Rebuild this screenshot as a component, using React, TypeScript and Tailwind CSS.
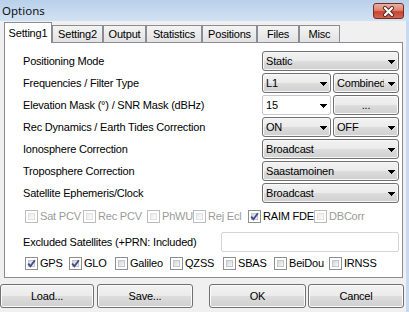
const Arrow = () => (
  <svg width="7" height="4" viewBox="0 0 7 4" shapeRendering="crispEdges">
    <path d="M0 0H7V1H6V2H5V3H4V4H3V3H2V2H1V1H0Z" fill="#000" />
  </svg>
);

const Select = ({ value, className }: { value: string; className: string }) => (
  <div
    className={
      "h-[20px] flex items-center border border-[#707070] rounded-[3px] bg-[linear-gradient(180deg,#f2f2f2_0%,#ebebeb_50%,#dddddd_51%,#cfcfcf_100%)] shadow-[inset_0_0_0_1px_#f7f7f7] " +
      className
    }
  >
    <span className="flex-1 pl-[3px] overflow-hidden whitespace-nowrap">{value}</span>
    <span className="w-[14px] shrink-0 flex justify-center pt-[1px]">
      <Arrow />
    </span>
  </div>
);

const Check = ({ checked, disabled }: { checked?: boolean; disabled?: boolean }) => (
  <div
    className={
      "relative w-[13px] h-[13px] shrink-0 border bg-white p-[2px] " +
      (disabled ? "border-[#bcbcbc]" : "border-[#8e8f8f]")
    }
  >
    <div
      className={
        "w-full h-full border " +
        (disabled
          ? "border-[#e2e2e2] bg-linear-to-br from-[#ececec] to-[#fafafa]"
          : "border-[#c3c6cb] bg-linear-to-br from-[#d4d6d9] to-[#f7f7f7]")
      }
    />
    {checked && (
      <svg className="absolute left-0 top-0" width="11" height="11" viewBox="0 0 11 11">
        <path d="M2.2 5.6 L4.4 8.2 L8.9 2.2" fill="none" stroke="#3f4f8c" strokeWidth="1.9" />
      </svg>
    )}
  </div>
);

const Box = ({
  label,
  checked,
  disabled,
  width,
}: {
  label: string;
  checked?: boolean;
  disabled?: boolean;
  width: string;
}) => (
  <div className={"flex items-center gap-[2px] " + width}>
    <Check checked={checked} disabled={disabled} />
    <span className={disabled ? "text-[#9a9a9a]" : "text-black"}>{label}</span>
  </div>
);

const Button = ({ label, className }: { label: string; className: string }) => (
  <div
    className={
      "h-[24px] flex items-center justify-center border border-[#707070] rounded-[3px] bg-[linear-gradient(180deg,#f2f2f2_0%,#ebebeb_50%,#dddddd_51%,#cfcfcf_100%)] shadow-[inset_0_0_0_1px_#fbfbfb] " +
      className
    }
  >
    {label}
  </div>
);

export default function App() {
  const tabs = [
    { name: "Setting2", w: "w-[51px]" },
    { name: "Output", w: "w-[43px]" },
    { name: "Statistics", w: "w-[56px]" },
    { name: "Positions", w: "w-[55px]" },
    { name: "Files", w: "w-[42px]" },
    { name: "Misc", w: "w-[41px]" },
  ];

  const rows = [
    "Positioning Mode",
    "Frequencies / Filter Type",
    "Elevation Mask (°) / SNR Mask (dBHz)",
    "Rec Dynamics / Earth Tides Correction",
    "Ionosphere Correction",
    "Troposphere Correction",
    "Satellite Ephemeris/Clock",
  ];

  const control = (i: number) => {
    switch (i) {
      case 0:
        return <Select value="Static" className="w-[137px]" />;
      case 1:
        return (
          <div className="flex gap-[2px]">
            <Select value="L1" className="w-[69px]" />
            <Select value="Combined" className="w-[66px]" />
          </div>
        );
      case 2:
        return (
          <div className="flex gap-[2px]">
            <div className="w-[69px] h-[20px] flex items-center bg-white border border-[#c5c8cd] rounded-[2px]">
              <span className="flex-1 pl-[3px]">15</span>
              <span className="w-[14px] flex justify-center pt-[1px]">
                <Arrow />
              </span>
            </div>
            <Button label="..." className="w-[66px] !h-[20px]" />
          </div>
        );
      case 3:
        return (
          <div className="flex gap-[2px]">
            <Select value="ON" className="w-[69px]" />
            <Select value="OFF" className="w-[66px]" />
          </div>
        );
      case 4:
        return <Select value="Broadcast" className="w-[137px]" />;
      case 5:
        return <Select value="Saastamoinen" className="w-[137px]" />;
      default:
        return <Select value="Broadcast" className="w-[137px]" />;
    }
  };

  return (
    <div className="w-[409px] h-[312px] overflow-hidden flex flex-col bg-[#c7daf1] text-black font-['Liberation_Sans',Arial,sans-serif] text-[11px] tracking-[-0.2px]">
      {/* title bar */}
      <div className="h-[21px] shrink-0 flex items-center justify-between pl-[2px] pr-[5px] bg-linear-to-b from-[#b9d0eb] to-[#d2e2f4]">
        <span className="font-['Noto_Sans',sans-serif] text-[11.5px] tracking-normal text-[#111]">Options</span>
        <div className="w-[31px] h-[16px] mt-[1px] flex items-center justify-center rounded-[3px] border border-[#7b2a22] bg-[linear-gradient(180deg,#eab0a4_0%,#dc8270_45%,#c8442f_55%,#d06450_100%)]">
          <svg width="13" height="11" viewBox="0 0 13 11">
            <path d="M3 2 L10 9 M10 2 L3 9" stroke="#4a2a26" strokeWidth="4" strokeLinecap="round" />
            <path d="M3 2 L10 9 M10 2 L3 9" stroke="#fff" strokeWidth="2.2" strokeLinecap="round" />
          </svg>
        </div>
      </div>

      {/* client area */}
      <div className="flex-1 mr-[3px] bg-[#f0f0f0] flex flex-col">
        <div className="mt-[1px] h-[20px] pl-[4px] flex items-end relative z-10">
          <div className="w-[48px] h-[21px] -mb-px flex items-center justify-center bg-white border border-b-0 border-[#898c95]">
            Setting1
          </div>
          {tabs.map((t) => (
            <div
              key={t.name}
              className={
                "h-[17px] flex items-center justify-center border border-b-0 border-[#898c95] bg-linear-to-b from-[#f4f4f4] to-[#e2e2e2] " +
                t.w
              }
            >
              {t.name}
            </div>
          ))}
        </div>

        <div className="ml-[4px] w-[399px] h-[236px] bg-white border border-[#898c95] pt-[8px] flex flex-col">
          <div className="flex flex-col gap-[2px]">
            {rows.map((r, i) => (
              <div key={r} className="h-[20px] flex items-center justify-between pl-[18px] pr-[3px]">
                <span className="whitespace-nowrap">{r}</span>
                {control(i)}
              </div>
            ))}
          </div>

          <div className="mt-[7px] h-[13px] flex items-center pl-[20px]">
            <Box label="Sat PCV" disabled width="w-[58px]" />
            <Box label="Rec PCV" disabled width="w-[64px]" />
            <Box label="PhWU" disabled width="w-[46px]" />
            <Box label="Rej Ecl" disabled width="w-[55px]" />
            <Box label="RAIM FDE" checked width="w-[66px]" />
            <Box label="DBCorr" disabled width="w-[60px]" />
          </div>

          <div className="mt-[9px] h-[20px] flex items-center justify-between pl-[18px] pr-[3px]">
            <span>Excluded Satellites (+PRN: Included)</span>
            <div className="w-[178px] h-[20px] bg-white border border-[#d3d5d9] rounded-[2px]" />
          </div>

          <div className="mt-[5px] h-[13px] flex items-center pl-[20px]">
            <Box label="GPS" checked width="w-[44px]" />
            <Box label="GLO" checked width="w-[46px]" />
            <Box label="Galileo" width="w-[55px]" />
            <Box label="QZSS" width="w-[53px]" />
            <Box label="SBAS" width="w-[51px]" />
            <Box label="BeiDou" width="w-[55px]" />
            <Box label="IRNSS" width="w-[60px]" />
          </div>
        </div>

        <div className="mt-[6px] flex">
          <Button label="Load..." className="w-[94px]" />
          <Button label="Save..." className="ml-[3px] w-[96px]" />
          <Button label="OK" className="ml-[16px] w-[97px]" />
          <Button label="Cancel" className="ml-[2px] w-[96px]" />
        </div>
      </div>
    </div>
  );
}
